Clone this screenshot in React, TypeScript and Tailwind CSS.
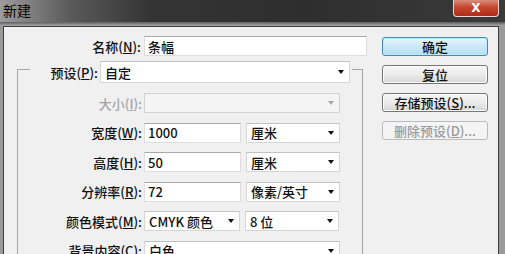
import React from "react";

function Arrow({ disabled }: { disabled?: boolean }) {
  return (
    <span
      className={
        disabled
          ? "w-0 h-0 border-l-[3.5px] border-r-[3.5px] border-t-[4px] border-l-transparent border-r-transparent border-t-[#a8a8a8]"
          : "w-0 h-0 border-l-[3.5px] border-r-[3.5px] border-t-[4px] border-l-transparent border-r-transparent border-t-[#111]"
      }
    />
  );
}

function Select({ cls, text, disabled }: { cls: string; text?: string; disabled?: boolean }) {
  return (
    <div
      className={
        (disabled
          ? "bg-[#f4f4f4] border border-[#d2d2d2] "
          : "bg-white border border-[#d6d6d6] border-t-[#c2c2c2] ") +
        "flex items-center justify-between pl-[4px] pr-[5px] " +
        cls
      }
    >
      <span className="leading-none">{text}</span>
      <Arrow disabled={disabled} />
    </div>
  );
}

function Input({ cls, text }: { cls: string; text: string }) {
  return (
    <div
      className={
        "bg-white border border-[#dedede] border-t-[#a9a9a9] flex items-center pl-[3px] leading-none " +
        cls
      }
    >
      {text}
    </div>
  );
}

function Btn({ children, kind }: { children: React.ReactNode; kind?: "default" | "disabled" }) {
  const base = "h-[19px] w-[106px] rounded-[3px] flex items-center justify-center leading-none ";
  if (kind === "default")
    return (
      <div
        className={
          base +
          "border border-[#3d8bb8] bg-[linear-gradient(#e6f5fd,#cbe9f8_50%,#b3dff5)] shadow-[inset_0_0_0_1px_#bfeafc] text-[#111]"
        }
      >
        {children}
      </div>
    );
  if (kind === "disabled")
    return (
      <div className={base + "border border-[#b8bcbf] bg-[#f4f4f4] text-[#9a9a9a]"}>{children}</div>
    );
  return (
    <div
      className={
        base +
        "border border-[#767676] bg-[linear-gradient(#f6f6f6,#ebebeb_50%,#d6d6d6)] shadow-[inset_0_0_0_1px_#fbfbfb] text-[#111]"
      }
    >
      {children}
    </div>
  );
}

function Row({ label, children }: { label: React.ReactNode; children: React.ReactNode }) {
  return (
    <div className="flex items-center h-[20px]">
      <div className="w-[124px] text-right leading-none whitespace-nowrap">{label}</div>
      <div className="ml-[2px] flex gap-[5px]">{children}</div>
    </div>
  );
}

export default function App() {
  return (
    <div className="w-[505px] h-[254px] overflow-hidden bg-[#9a9a9a] flex flex-col font-['Noto_Sans_CJK_SC','Noto_Sans',sans-serif] font-medium text-[13px] text-[#111]">
      {/* Title bar */}
      <div className="h-[22px] shrink-0 flex justify-between bg-[linear-gradient(90deg,#9c9c9c_0%,#5a5a5a_14%,#343434_30%,#2e2e2e_60%,#3a3a3a_100%)]">
        <div className="pl-[3px] pt-[3px] leading-none text-[14px] font-normal text-black">新建</div>
        <div className="mr-[6px] w-[46px] h-[17px] rounded-b-[4px] border border-t-0 border-[#ecd6d2] bg-[linear-gradient(#d98c7c,#c6472f_45%,#b02a18)] flex items-center justify-center">
          <span className="text-white text-[12px] font-bold leading-none font-['DejaVu_Sans',sans-serif]">X</span>
        </div>
      </div>
      <div className="h-[4px] shrink-0 bg-[linear-gradient(#5e5e5e,#a8a8a8)]" />
      {/* Body */}
      <div className="flex-1 flex pl-[3px] pr-[6px]">
        <div className="flex-1 border-l border-t border-r border-[#3e3e3e] bg-[#f0f0f0] flex">
          {/* Left form */}
          <div className="w-[365px] shrink-0 flex flex-col">
            <div className="flex items-center mt-[9px]">
              <div className="w-[137px] text-right leading-none">
                名称(<span className="underline">N</span>):
              </div>
              <Input cls="ml-[3px] w-[223px] h-[20px]" text="条幅" />
            </div>
            {/* Group box */}
            <div className="mt-[13px] ml-[13px] w-[346px] border-l border-t border-r border-[#a6a6a6] flex flex-col">
              <div className="-mt-[9px] ml-[12px] w-[322px] bg-[#f0f0f0] flex items-center">
                <div className="w-[68px] text-right leading-none whitespace-nowrap">
                  预设(<span className="underline">P</span>):
                </div>
                <Select cls="ml-[2px] w-[250px] h-[22px]" text="自定" />
              </div>
              <div className="mt-[10px] flex flex-col gap-[9.6px]">
                <Row label={<span className="text-[#a4a4a4]">大小(<span className="underline">I</span>):</span>}>
                  <Select cls="w-[196px] h-[20px]" disabled />
                </Row>
                <Row label={<>宽度(<span className="underline">W</span>):</>}>
                  <Input cls="w-[97px] h-[20px]" text="1000" />
                  <Select cls="w-[94px] h-[20px]" text="厘米" />
                </Row>
                <Row label={<>高度(<span className="underline">H</span>):</>}>
                  <Input cls="w-[97px] h-[20px]" text="50" />
                  <Select cls="w-[94px] h-[20px]" text="厘米" />
                </Row>
                <Row label={<>分辨率(<span className="underline">R</span>):</>}>
                  <Input cls="w-[97px] h-[20px]" text="72" />
                  <Select cls="w-[94px] h-[20px]" text="像素/英寸" />
                </Row>
                <Row label={<>颜色模式(<span className="underline">M</span>):</>}>
                  <Select cls="w-[96px] h-[20px]" text="CMYK 颜色" />
                  <Select cls="w-[94px] h-[20px]" text="8 位" />
                </Row>
                <Row label={<>背景内容(<span className="underline">C</span>):</>}>
                  <Select cls="w-[196px] h-[20px]" text="白色" />
                </Row>
              </div>
            </div>
          </div>
          {/* Buttons */}
          <div className="ml-[13px] mt-[10px] flex flex-col gap-[9px]">
            <Btn kind="default">确定</Btn>
            <Btn>复位</Btn>
            <Btn>
              存储预设(<span className="underline">S</span>)...
            </Btn>
            <Btn kind="disabled">
              删除预设(<span className="underline">D</span>)...
            </Btn>
          </div>
        </div>
      </div>
    </div>
  );
}
